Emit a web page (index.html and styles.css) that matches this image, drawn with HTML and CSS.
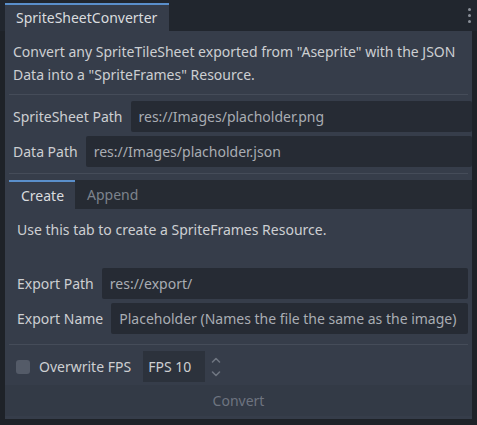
FILE: index.html
```html
<!DOCTYPE html>
<html>
<head>
<meta charset="utf-8">
<link rel="stylesheet" href="styles.css">
</head>
<body>
<div class="dock">
  <div class="dock-tabs">
    <div class="dock-tab">SpriteSheetConverter</div>
    <div class="spacer"></div>
    <div class="kebab"><span></span><span></span><span></span></div>
  </div>
  <div class="panel">
    <p class="desc">Convert any SpriteTileSheet exported from "Aseprite" with the JSON Data into a "SpriteFrames" Resource.</p>
    <div class="sep"></div>
    <div class="rows">
      <div class="row">
        <span class="label">SpriteSheet Path</span>
        <div class="edit">res://Images/placholder.png</div>
      </div>
      <div class="row">
        <span class="label">Data Path</span>
        <div class="edit">res://Images/placholder.json</div>
      </div>
    </div>
    <div class="sep"></div>
    <div class="tabs">
      <div class="tabbar">
        <div class="tab active">Create</div>
        <div class="tab">Append</div>
      </div>
      <div class="tabpanel">
        <p class="hint">Use this tab to create a SpriteFrames Resource.</p>
        <div class="rows">
          <div class="row">
            <span class="label">Export Path</span>
            <div class="edit">res://export/</div>
          </div>
          <div class="row">
            <span class="label">Export Name</span>
            <div class="edit">Placeholder (Names the file the same as the image)</div>
          </div>
        </div>
      </div>
    </div>
    <div class="sep"></div>
    <div class="fps-row">
      <span class="check"></span>
      <span class="label">Overwrite FPS</span>
      <div class="spin">FPS 10</div>
      <svg class="arrows" width="10" height="24" viewBox="0 0 10 24">
        <path d="M1.5 7 L5 3.5 L8.5 7" fill="none" stroke="#6e7580" stroke-width="1.6" stroke-linecap="round" stroke-linejoin="round"/>
        <path d="M1.5 17 L5 20.5 L8.5 17" fill="none" stroke="#6e7580" stroke-width="1.6" stroke-linecap="round" stroke-linejoin="round"/>
      </svg>
    </div>
    <div class="button">Convert</div>
  </div>
</div>
</body>
</html>
```
FILE: styles.css
```css
html, body {
  margin: 0;
  padding: 0;
}
body {
  width: 477px;
  height: 425px;
  background: #1e2228;
  font-family: "Noto Sans", "Open Sans", sans-serif;
  font-size: 14px;
  color: #cdcfd2;
  overflow: hidden;
}
.dock {
  display: flex;
  flex-direction: column;
  height: 419px;
}
.dock-tabs {
  display: flex;
  height: 31px;
  background: #21262e;
  padding-left: 5px;
  padding-right: 5px;
  box-sizing: border-box;
  align-items: stretch;
}
.dock-tab {
  margin-top: 3px;
  width: 164px;
  box-sizing: border-box;
  border-top: 2px solid #5a8fcb;
  background: #363d4a;
  padding-left: 11px;
  line-height: 25px;
  color: #dadcdf;
}
.spacer { flex: 1; }
.kebab {
  display: flex;
  flex-direction: column;
  justify-content: center;
  gap: 3px;
  width: 6px;
  align-items: center;
}
.kebab span {
  width: 3px;
  height: 3px;
  border-radius: 50%;
  background: #8b9099;
}
.panel {
  flex: 1;
  margin: 0 5px;
  background: #363d4a;
  padding: 9px 0 0 0;
  display: flex;
  flex-direction: column;
}
.desc {
  margin: 0 8px;
  line-height: 23px;
}
.sep {
  height: 1px;
  background: #454c59;
  margin: 8px 4px 6px 4px;
}
.rows {
  display: flex;
  flex-direction: column;
  gap: 4px;
}
.rows + .sep {
  margin-top: 6px;
}
.row {
  display: flex;
  align-items: center;
  gap: 8px;
  padding: 0 0 0 8px;
  height: 31px;
}
.label {
  white-space: nowrap;
}
.edit {
  flex: 1;
  height: 31px;
  line-height: 31px;
  background: #262b34;
  border-radius: 2px;
  padding-left: 8px;
  color: #a9adb3;
  white-space: nowrap;
  overflow: hidden;
}
.tabs {
  margin: 0 0 0 4px;
}
.tabbar {
  display: flex;
  background: #262b33;
  height: 29px;
}
.tab {
  padding: 0 12px;
  line-height: 29px;
  color: #7d838c;
  box-sizing: border-box;
}
.tab.active {
  background: #363d4a;
  border-top: 2px solid #5a8fcb;
  line-height: 27px;
  color: #dadcdf;
  width: 66px;
}
.tabpanel {
  padding: 9px 4px 4px 0;
}
.hint {
  margin: 0 0 27px 8px;
  line-height: 23px;
}
.tabpanel .row {
  padding-left: 8px;
}
.tabs + .sep {
  margin-top: 6px;
}
.fps-row {
  display: flex;
  align-items: center;
  height: 31px;
  padding-left: 11px;
}
.check {
  width: 14px;
  height: 14px;
  border-radius: 3px;
  background: #545b68;
  margin-right: 9px;
}
.spin {
  margin-left: 12px;
  width: 62px;
  height: 31px;
  line-height: 31px;
  background: #2c323c;
  padding-left: 5px;
  box-sizing: border-box;
}
.arrows {
  margin-left: 6px;
}
.button {
  margin-top: 3px;
  height: 31px;
  line-height: 31px;
  text-align: center;
  color: #6e7480;
  background: #333a46;
}
```
